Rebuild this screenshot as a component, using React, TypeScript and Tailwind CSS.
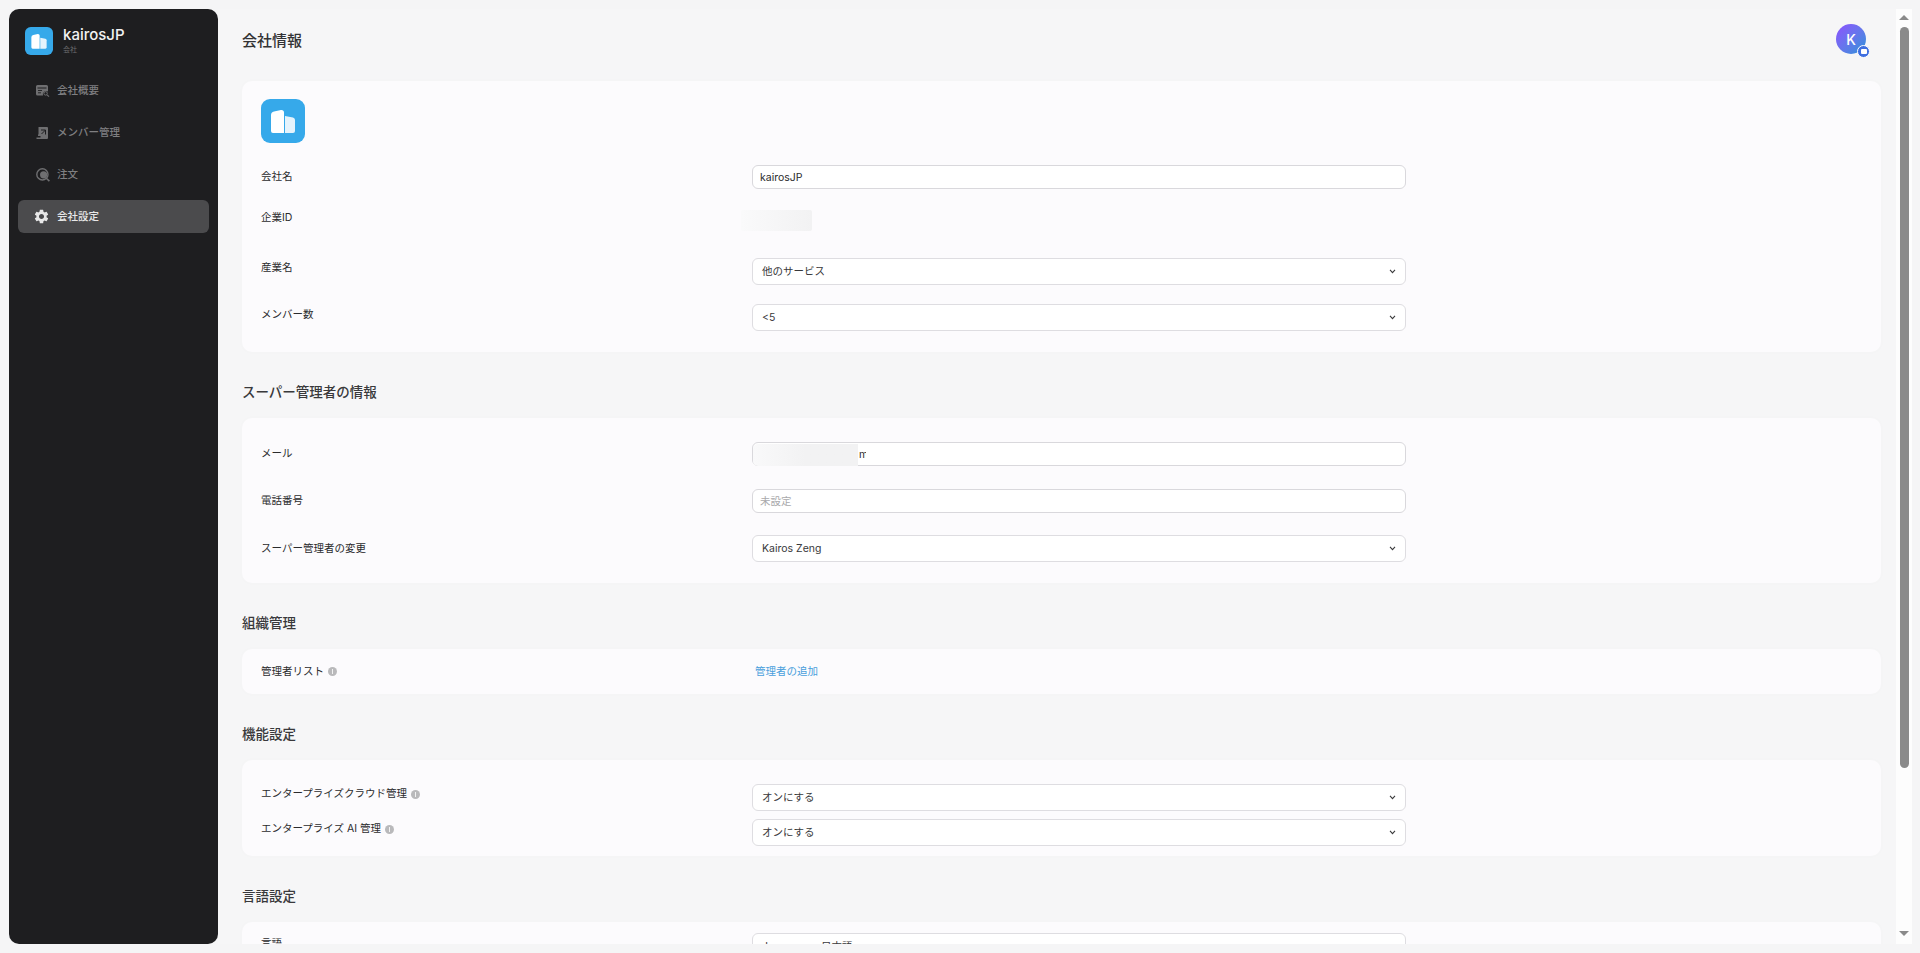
import React from "react";
import { MdSettings } from "react-icons/md";

const BuildingLogo = ({ className }: { className: string }) => (
  <svg viewBox="0 0 44 44" className={className}>
    <rect width="44" height="44" rx="9" fill="#36a9ea" />
    <path d="M10 32V16Q10 13 13 12.5L20 11Q23 10.8 23 13.5V34H12Q10 34 10 32Z" fill="#ffffff" />
    <path d="M24 17L32 18.5Q34 19 34 21V32Q34 34 32 34H24Z" fill="#e4f3fc" />
  </svg>
);

const ReportIcon = () => (
  <svg viewBox="0 0 14 12" className="w-[14px] h-[12px]">
    <path d="M0 1.5Q0 0 1.5 0H10.5Q12 0 12 1.5V6.5A3.4 3.4 0 0 0 7 10.5H1.5Q0 10.5 0 9Z" fill="#6f6f71" />
    <path d="M1.5 3H10.5" stroke="#1e1e20" strokeWidth="1" />
    <path d="M2 5.5H6M2 7.8H5" stroke="#1e1e20" strokeWidth="0.9" />
    <circle cx="9.6" cy="8.4" r="1.7" fill="none" stroke="#6f6f71" strokeWidth="1" />
    <path d="M11 9.8L13 11.6" stroke="#6f6f71" strokeWidth="1.1" />
  </svg>
);

const MemberIcon = () => (
  <svg viewBox="0 0 12 12" className="w-[12px] h-[12px]">
    <path d="M2.5 0H11Q12 0 12 1V11Q12 12 11 12H0.5V10.6H4.5V9H2V7.6H2.5Z" fill="#6f6f71" />
    <path d="M5 3H9.5V7.5M9.5 3L5.5 7" fill="none" stroke="#1e1e20" strokeWidth="1" />
  </svg>
);

const OrderIcon = () => (
  <svg viewBox="0 0 14 14" className="w-[14px] h-[14px]">
    <circle cx="6.4" cy="6.4" r="5.6" fill="none" stroke="#6f6f71" strokeWidth="1.4" />
    <circle cx="7.6" cy="6.8" r="3.6" fill="#6f6f71" />
    <path d="M10 10L13.4 13.2" stroke="#6f6f71" strokeWidth="1.6" />
  </svg>
);

const Chevron = () => (
  <svg viewBox="0 0 8 6" className="w-[7px] h-[5px]">
    <path d="M1 1L4 4.4L7 1" fill="none" stroke="#3a3a3c" strokeWidth="1.3" />
  </svg>
);

const Info = () => (
  <span className="ml-[4px] inline-flex h-[9px] w-[9px] items-center justify-center rounded-full bg-[#b9b9bb]">
    <span className="h-[5px] w-[1.5px] bg-[#f2f2f2]" />
  </span>
);

const NavItem = ({ icon, label, active }: { icon: React.ReactNode; label: string; active?: boolean }) => (
  <div
    className={`flex h-[33px] items-center rounded-[6px] ${
      active ? "bg-[#4b4b4d] text-[#e8e8e8]" : "text-[#7f7f81]"
    }`}
  >
    <span className="flex w-[39px] pl-[18px]">{icon}</span>
    <span className="text-[10.5px] font-medium">{label}</span>
  </div>
);

const Label = ({ children }: { children: React.ReactNode }) => (
  <div className="flex h-[20px] w-[491px] shrink-0 items-center text-[10.5px] text-[#2b2b2d]">{children}</div>
);

const SelectBox = ({ value }: { value: string }) => (
  <div className="flex h-[27px] w-[654px] items-center justify-between rounded-[6px] border border-[#dedde1] bg-white pl-[9px] pr-[9px] text-[10.5px] text-[#38383a]">
    <span className="pt-[1px]">{value}</span>
    <Chevron />
  </div>
);

const TextBox = ({ children }: { children: React.ReactNode }) => (
  <div className="flex h-[24px] w-[654px] items-center rounded-[6px] border border-[#d9d8dc] bg-white pl-[7px] pt-[1px] text-[10.5px] text-[#2b2b2d]">
    {children}
  </div>
);

const Card = ({ className, children }: { className: string; children: React.ReactNode }) => (
  <section className={`rounded-[10px] bg-[#fcfbfd] pl-[19px] shadow-[0_0_6px_rgba(0,0,0,0.015)] ${className}`}>
    {children}
  </section>
);

const SectionTitle = ({ children }: { children: React.ReactNode }) => (
  <h2 className="flex h-[66px] items-center pt-[14px] text-[13.5px] font-medium text-[#39393b]">{children}</h2>
);

export default function App() {
  return (
    <div className="flex h-[953px] overflow-hidden bg-[#f5f5f6] py-[9px] pl-[9px] pr-[8px] font-[family-name:Inter,'Noto_Sans_CJK_JP',sans-serif]">
      <aside className="w-[209px] shrink-0 rounded-[10px] bg-[#1e1e20] px-[9px]">
        <div className="flex h-[58px] items-center pl-[7px] pt-[6px]">
          <BuildingLogo className="h-[28px] w-[28px]" />
          <div className="ml-[10px] mt-[-2px]">
            <div className="text-[15px] font-medium leading-[18px] text-[#f2f2f2]">kairosJP</div>
            <div className="mt-[1px] text-[7px] leading-[10px] text-[#6c6c6e]">会社</div>
          </div>
        </div>
        <nav className="mt-[7px] flex flex-col gap-[9px]">
          <NavItem icon={<ReportIcon />} label="会社概要" />
          <NavItem icon={<MemberIcon />} label="メンバー管理" />
          <NavItem icon={<OrderIcon />} label="注文" />
          <NavItem
            icon={<MdSettings className="ml-[-3px] h-[17px] w-[17px] shrink-0 text-[#e8e8e8]" />}
            label="会社設定"
            active
          />
        </nav>
      </aside>

      <main className="relative flex-1 overflow-hidden bg-[#f6f6f7] pl-[24px] pr-[15px]">
        <header className="flex h-[72px] items-start justify-between">
          <h1 className="mt-[20px] text-[15px] font-medium leading-[24px] text-[#333335]">会社情報</h1>
          <div className="relative mr-[15px] mt-[15px] flex h-[30px] w-[30px] items-center justify-center rounded-full bg-gradient-to-br from-[#8a4dff] to-[#0a92d8] text-[14px] font-medium text-white">
            K
            <span className="absolute bottom-[-4px] right-[-4px] flex h-[13px] w-[13px] items-center justify-center rounded-full border border-white bg-[#3f6fe0]">
              <span className="h-[5px] w-[6px] rounded-[1px] bg-white" />
            </span>
          </div>
        </header>

        <Card className="h-[271px] pt-[18px]">
          <BuildingLogo className="h-[44px] w-[44px]" />
          <div className="mt-[22px] flex">
            <Label>
              <span className="mt-[4px]">会社名</span>
            </Label>
            <TextBox>kairosJP</TextBox>
          </div>
          <div className="mt-[21px] flex">
            <Label>
              <span className="mt-[-5px]">企業ID</span>
            </Label>
            <div className="ml-[-11px] h-[21px] w-[71px] rounded-[2px] bg-gradient-to-r from-[#fafafb] to-[#f2f2f3]" />
          </div>
          <div className="mt-[27px] flex">
            <Label>産業名</Label>
            <SelectBox value="他のサービス" />
          </div>
          <div className="mt-[19px] flex">
            <Label>
              <span className="mt-[2px]">メンバー数</span>
            </Label>
            <SelectBox value="<5" />
          </div>
        </Card>

        <SectionTitle>スーパー管理者の情報</SectionTitle>
        <Card className="h-[165px] pt-[24px]">
          <div className="flex">
            <Label>
              <span className="mt-[4px]">メール</span>
            </Label>
            <TextBox>
              <span className="ml-[-7px] h-[22px] w-[105px] rounded-l-[5px] bg-gradient-to-r from-[#f9f9fa] via-[#f2f2f3] to-[#f2f2f3]" />
              <span className="ml-[1px] w-[7px] overflow-hidden">m</span>
            </TextBox>
          </div>
          <div className="mt-[23px] flex">
            <Label>
              <span className="mt-[4px]">電話番号</span>
            </Label>
            <TextBox>
              <span className="text-[#a9a9ab]">未設定</span>
            </TextBox>
          </div>
          <div className="mt-[22px] flex">
            <Label>
              <span className="mt-[8px]">スーパー管理者の変更</span>
            </Label>
            <SelectBox value="Kairos Zeng" />
          </div>
        </Card>

        <SectionTitle>組織管理</SectionTitle>
        <Card className="flex h-[45px] items-center">
          <Label>
            管理者リスト
            <Info />
          </Label>
          <span className="ml-[3px] pt-[1px] text-[10.5px] text-[#4a9fdc]">管理者の追加</span>
        </Card>

        <SectionTitle>機能設定</SectionTitle>
        <Card className="h-[96px] pt-[24px]">
          <div className="flex">
            <Label>
              エンタープライズクラウド管理
              <Info />
            </Label>
            <SelectBox value="オンにする" />
          </div>
          <div className="mt-[8px] flex">
            <Label>
              エンタープライズ AI 管理
              <Info />
            </Label>
            <SelectBox value="オンにする" />
          </div>
        </Card>

        <SectionTitle>言語設定</SectionTitle>
        <Card className="h-[60px] pt-[11px]">
          <div className="flex">
            <Label>
              <span className="mt-[1px]">言語</span>
            </Label>
            <SelectBox value="Japanese - 日本語" />
          </div>
        </Card>
      </main>

      {/* scrollbar column */}
      <div className="flex w-[16px] shrink-0 flex-col items-center bg-[#fdfdfd] pb-[8px] pt-[6px]">
        <div className="h-0 w-0 border-x-[5px] border-b-[5px] border-x-transparent border-b-[#8a8a8a]" />
        <div className="mt-[7px] h-[741px] w-[9px] rounded-full bg-[#8a8a8a]" />
        <div className="mt-auto h-0 w-0 border-x-[5px] border-t-[5px] border-x-transparent border-t-[#8a8a8a]" />
      </div>
    </div>
  );
}
